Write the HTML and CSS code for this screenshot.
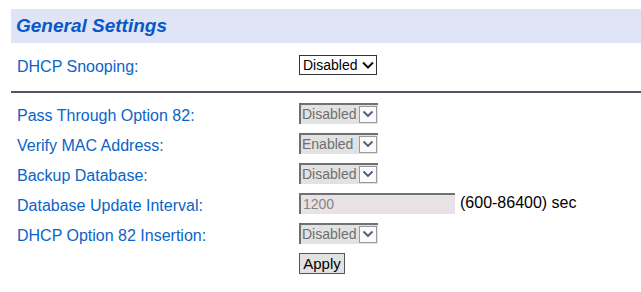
FILE: index.html
```html
<!DOCTYPE html>
<html lang="en">
<head>
    <meta charset="UTF-8">
    <title>General Settings</title>
    <link rel="stylesheet" href="styles.css">
</head>
<body>
    <div class="page-title">General Settings</div>
    <form class="settings">
        <div class="row">
            <label class="field-label">DHCP Snooping:</label>
            <span class="drop">
                <select class="drop-box"><option>Disabled</option><option>Enabled</option></select>
                <span class="drop-arrow"><svg width="12" height="8" viewBox="0 0 12 8"><path d="M1 1.5 L6 6.5 L11 1.5" fill="none" stroke="#111" stroke-width="2"/></svg></span>
            </span>
        </div>
        <hr class="divider">
        <div class="row">
            <label class="field-label">Pass Through Option 82:</label>
            <span class="drop off">
                <select class="drop-box" disabled><option>Disabled</option></select>
                <span class="drop-arrow"><svg width="12" height="8" viewBox="0 0 12 8"><path d="M1.5 1.5 L6 6 L10.5 1.5" fill="none" stroke="#4a5a78" stroke-width="1.8"/></svg></span>
            </span>
        </div>
        <div class="row">
            <label class="field-label">Verify MAC Address:</label>
            <span class="drop off">
                <select class="drop-box" disabled><option>Enabled</option></select>
                <span class="drop-arrow"><svg width="12" height="8" viewBox="0 0 12 8"><path d="M1.5 1.5 L6 6 L10.5 1.5" fill="none" stroke="#4a5a78" stroke-width="1.8"/></svg></span>
            </span>
        </div>
        <div class="row">
            <label class="field-label">Backup Database:</label>
            <span class="drop off">
                <select class="drop-box" disabled><option>Disabled</option></select>
                <span class="drop-arrow"><svg width="12" height="8" viewBox="0 0 12 8"><path d="M1.5 1.5 L6 6 L10.5 1.5" fill="none" stroke="#4a5a78" stroke-width="1.8"/></svg></span>
            </span>
        </div>
        <div class="row">
            <label class="field-label">Database Update Interval:</label>
            <span class="field-line">
                <input type="text" class="text-box" value="1200" disabled>
                <span class="unit">(600-86400) sec</span>
            </span>
        </div>
        <div class="row">
            <label class="field-label">DHCP Option 82 Insertion:</label>
            <span class="drop off">
                <select class="drop-box" disabled><option>Disabled</option></select>
                <span class="drop-arrow"><svg width="12" height="8" viewBox="0 0 12 8"><path d="M1.5 1.5 L6 6 L10.5 1.5" fill="none" stroke="#4a5a78" stroke-width="1.8"/></svg></span>
            </span>
        </div>
        <div class="row">
            <span></span>
            <button type="button" class="apply">Apply</button>
        </div>
    </form>
</body>
</html>
```

FILE: styles.css
```css
body {
    margin: 0;
    padding: 9px 0 0 11px;
    font-family: "Liberation Sans", Arial, sans-serif;
    font-size: 16px;
    background: #fff;
}

.page-title {
    height: 34px;
    line-height: 34px;
    padding-left: 5px;
    background-color: #dfe4f6;
    color: #0758c8;
    font-size: 19px;
    font-weight: bold;
    font-style: italic;
}

.settings {
    margin: 0;
}

.row {
    display: grid;
    grid-template-columns: 288px auto;
    align-items: center;
    height: 30px;
}

.settings > .row:first-child {
    margin-top: 6px;
    height: 31px;
}

.field-label {
    padding-left: 6px;
    padding-top: 5px;
    color: #0a64c8;
}

.divider {
    margin: 11px 0 5px 0;
    border: none;
    border-top: 2px solid #5d5060;
    height: 0;
}

.drop {
    display: inline-flex;
    align-items: stretch;
    width: 78px;
    height: 20px;
    box-sizing: border-box;
    border: 1px solid #333;
    background: #fff;
}

.drop-box {
    appearance: none;
    -webkit-appearance: none;
    opacity: 1;
    border: none;
    background: transparent;
    font-family: "Liberation Sans", Arial, sans-serif;
    font-size: 14px;
    color: #000;
    padding: 0 0 0 3px;
    margin: 0;
    width: 60px;
    outline: none;
}

.drop-arrow {
    display: flex;
    align-items: center;
    justify-content: center;
    width: 16px;
}

.drop.off {
    width: 79px;
    height: 21px;
    border: none;
    border-top: 2px solid #707070;
    border-left: 2px solid #707070;
    background: #e2e2e2;
}

.drop.off .drop-box {
    color: #6f6f6f;
    width: 58px;
    padding-left: 1px;
}

.drop.off .drop-arrow {
    width: 16px;
    margin: 1px 1px 1px 0;
    background: #fbfbfb;
    border: 1px solid #9a9a9a;
}

.field-line {
    display: flex;
    align-items: center;
}

.text-box {
    width: 156px;
    height: 21px;
    box-sizing: border-box;
    border: none;
    border-top: 2px solid #707070;
    border-left: 2px solid #707070;
    background: #e8e2e6;
    color: #858585;
    opacity: 1;
    font-family: "Liberation Sans", Arial, sans-serif;
    font-size: 14px;
    padding: 0 0 0 2px;
    margin: 0;
}

.unit {
    margin-left: 5px;
    color: #000;
    font-size: 16px;
}

.apply {
    justify-self: start;
    width: 46px;
    height: 21px;
    padding: 0;
    font-family: "Liberation Sans", Arial, sans-serif;
    font-size: 15px;
    color: #000;
    background: #e2e2e2;
    border: 1px solid #555;
    border-radius: 0;
}
```
